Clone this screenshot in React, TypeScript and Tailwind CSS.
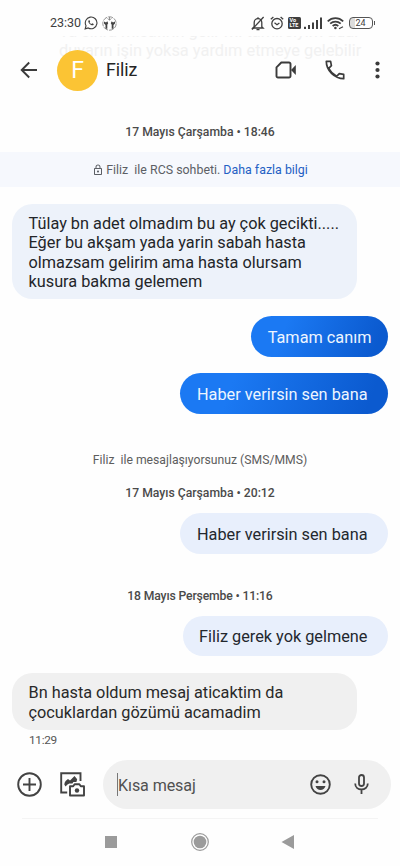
import React from 'react';
import { MdOutlineLock } from 'react-icons/md';

const ROBOTO = "font-['Roboto',sans-serif]";

function StatusBar() {
  return (
    <div className="relative flex h-[46px] items-center pl-[50px] pr-[25px] text-[#3f3f3f]">
      <span className="w-[34px] whitespace-nowrap text-[12.5px] leading-none">23:30</span>
      {/* WhatsApp */}
      <svg className="h-[14px] w-[14px]" viewBox="0 0 24 24" fill="none" stroke="currentColor" strokeWidth="1.9">
        <path d="M2 22l1.5-5.3A10 10 0 1 1 7.3 20.5z" />
        <path d="M8.2 7.2c-1.8 1.6-.5 4.3 1.7 6.5 2.3 2.2 5.1 3.3 6.6 1.3l.1-1.3-2.5-1.3-1.2 1.3c-1.5-.6-2.7-1.7-3.4-3.2l1-1.1-1-2.3z" fill="currentColor" stroke="none" />
      </svg>
      <svg className="ml-[4px] h-[15px] w-[15px]" viewBox="0 0 15 15" fill="none" stroke="#666" strokeWidth="0.7">
        <circle cx="7.5" cy="7.5" r="6.7" strokeDasharray="5 1" />
        <path d="M2 5.5l2 1 1.3-1.2.9 2-.9 1.4v4H3.500V9L2 7.500zM13 5.500l-2 1-1.300-1.200-.9 2 .9 1.400v4h1.800V9L13 7.500z" fill="#444" stroke="none" />
        <path d="M5.500 2.500L7.500 4l2-1.500M7.500 1v3" />
      </svg>
      <div className="ml-auto flex items-center">
        <svg className="h-[15px] w-[14px]" viewBox="0 0 14 15" fill="none" stroke="currentColor" strokeWidth="1.3">
          <path d="M3.200 10.800V6.500a3.800 3.800 0 0 1 7.600 0v4.300l1.300 1.200H1.900z" />
          <path d="M7 1.200v1.500M5.500 13.600h3" />
          <path d="M12.600 1L1 13.500" />
        </svg>
        <svg className="ml-[5px] h-[14px] w-[14px]" viewBox="0 0 14 14" fill="none" stroke="currentColor" strokeWidth="1.3">
          <circle cx="7" cy="7.700" r="5.200" />
          <path d="M.8 3.300l2.600-2.200M13.200 3.300l-2.600-2.200M4.500 6.700L7 8.700l2.400-1.800" />
        </svg>
        <span className="ml-[4px] flex h-[12px] w-[13px] flex-col items-center justify-center rounded-[1.5px] bg-[#3f3f3f] text-[5.5px] font-bold leading-[5px] text-white">
          Vo<br />LTE
        </span>
        <svg className="ml-[3px] h-[12px] w-[18px]" viewBox="0 0 18 12" fill="currentColor">
          <path d="M0 9.800h2V12H0zM4 8h2v4H4zM8 5.600h2V12H8zM12 3h2v9h-2zM16 .5h2V12h-2z" />
        </svg>
        <svg className="ml-[5px] h-[13px] w-[17px]" viewBox="0 0 17 13" fill="none" stroke="currentColor" strokeWidth="1.7">
          <path d="M.7 4.300c4.500-4.200 11-4.200 15.500 0M3.200 6.700c3-2.800 7.500-2.800 10.500 0M5.600 9c1.700-1.500 4-1.500 5.700 0" />
          <circle cx="8.400" cy="11" r="1.300" fill="currentColor" stroke="none" />
          <path d="M12 11.800l4-2" strokeWidth="1.200" />
        </svg>
        <span className="ml-[5px] flex h-[12px] w-[24px] items-center justify-center rounded-[4px] border-[1.5px] border-[#555] bg-[linear-gradient(90deg,#dcdcdc_25%,#ffffff_25%)] text-[9px] leading-none">24</span>
        <span className="ml-px h-[4px] w-[1.5px] bg-[#555]" />
      </div>
    </div>
  );
}

function Header() {
  return (
    <header className="relative flex h-[48px] items-center pl-[20px] text-[#3b3b3b]">
      <svg className="h-[18px] w-[18px]" viewBox="0 0 18 18" fill="none" stroke="currentColor" strokeWidth="1.9">
        <path d="M17 9H2M9.200 1.500L1.700 9l7.500 7.500" />
      </svg>
      <div className="ml-[19px] flex h-[41px] w-[41px] items-center justify-center rounded-full bg-[#fbc434] text-[23px] leading-none text-white">F</div>
      <h1 className="ml-[8px] text-[17.8px] leading-none tracking-[-0.1px] text-[#252525]">Filiz</h1>
      <svg className="ml-auto h-[18px] w-[22px]" viewBox="0 0 22 18" fill="none" stroke="currentColor" strokeWidth="1.9" strokeLinejoin="round">
        <path d="M6.300 1.500H14a1.500 1.500 0 0 1 1.500 1.500v12a1.500 1.500 0 0 1-1.500 1.500H3A1.500 1.500 0 0 1 1.500 15V6.300z" />
        <path d="M16 9l4.800-5v10z" fill="currentColor" stroke="none" />
      </svg>
      {/* Handset */}
      <svg className="ml-[28px] h-[20px] w-[20px]" viewBox="0 0 20 20" fill="none" stroke="currentColor" strokeWidth="1.7" strokeLinejoin="round">
        <path d="M1.300 1.300h4.300l.8 4.400-2.700 2.700c1.800 3.400 4.400 6 7.900 7.900l2.700-2.700 4.400.8v4.300C9.500 18.700 1.300 10.500 1.300 1.300z" />
      </svg>
      <svg className="ml-[30px] mr-[20px] h-[18px] w-[5px]" viewBox="0 0 5 18" fill="currentColor">
        <circle cx="2.500" cy="2.500" r="2.100" />
        <circle cx="2.500" cy="9" r="2.100" />
        <circle cx="2.500" cy="15.500" r="2.100" />
      </svg>
    </header>
  );
}

function DateLabel({ children, tight }: { children: React.ReactNode; tight?: boolean }) {
  return (
    <div
      className={`flex h-[20px] items-center justify-center whitespace-nowrap text-[12.2px] font-medium text-[#4a4a4a] ${tight ? 'tracking-[-0.15px]' : ''}`}
    >
      {children}
    </div>
  );
}

const tones = {
  received: 'self-start w-[345px] pl-[16.5px] bg-[#edf2fa] text-[#232529]',
  plain: 'self-start w-[345px] pl-[16.5px] bg-[#f0f0f0] text-[#292929]',
  rcs: 'self-end bg-[linear-gradient(110deg,#1b79f3_25%,#0b5acf_90%)] text-[#edf5ff]',
  sms: 'self-end pl-[16.5px] pr-[20.5px] bg-[#e8effc] text-[#23272e]',
};

function Bubble({ tone, className, lines }: { tone: keyof typeof tones; className: string; lines: string[] }) {
  return (
    <div className={`flex flex-col justify-center rounded-[20.5px] pt-[2px] text-[16.3px] leading-[19.3px] ${tones[tone]} ${className}`}>
      {lines.map((line) => (
        <span key={line} className="whitespace-nowrap">{line}</span>
      ))}
    </div>
  );
}

function Composer() {
  return (
    <div className="flex h-[49px] items-center pl-[17px] pr-[9px] text-[#434343]">
      <svg className="h-[25px] w-[25px]" viewBox="0 0 25 25" fill="none" stroke="currentColor" strokeWidth="1.9">
        <circle cx="12.500" cy="12.500" r="11.300" />
        <path d="M12.500 6v13M6 12.500h13" />
      </svg>
      {/* Gallery with camera */}
      <svg className="ml-[18px] h-[25px] w-[25px]" viewBox="0 0 25 25" fill="none" stroke="currentColor" strokeWidth="1.9">
        <path d="M20.500 9V1.300H1.200V20.500h6" />
        <path d="M4.300 12.500c.3-3.200 2-4.300 3.700-5.500l2 1.500 4.500-4.500 2.700 3.200-.8 2.800h-3l-1 1.500H9.300l-1.800 1-2 2z" fill="currentColor" stroke="none" />
        <path d="M10 14.200h3.200l1.400-2h4.800l1.400 2H24v9.300H10z" strokeLinejoin="round" />
        <circle cx="17" cy="18.500" r="2.200" fill="currentColor" stroke="none" />
      </svg>
      <div className="ml-[18px] flex h-full flex-1 items-center rounded-full bg-[#f0f0f0] pl-[14px] pr-[22px]">
        <span className="h-[23px] w-px bg-[#777]" />
        <span className="pt-[3px] text-[16.1px] tracking-[-0.1px] text-[#515151]">Kısa mesaj</span>
        <svg className="ml-auto h-[21px] w-[21px]" viewBox="0 0 21 21" fill="none" stroke="currentColor" strokeWidth="1.9">
          <circle cx="10.500" cy="10.500" r="9.300" />
          <circle cx="7" cy="7.800" r="1.500" fill="currentColor" stroke="none" />
          <circle cx="14" cy="7.800" r="1.500" fill="currentColor" stroke="none" />
          <path d="M5.500 12h10c-.8 2.500-2.700 3.900-5 3.900S6.300 14.500 5.500 12z" fill="currentColor" stroke="none" />
        </svg>
        <svg className="mb-[2px] ml-[23px] h-[20px] w-[15px]" viewBox="0 0 15 20" fill="none" stroke="currentColor" strokeWidth="1.8">
          <rect x="5" y="1" width="5" height="11" rx="2.500" />
          <path d="M1.200 9.500c0 8 12.600 8 12.600 0M7.500 15.500V20" />
        </svg>
      </div>
    </div>
  );
}

function NavBar() {
  return (
    <nav className="flex h-[46px] items-center pl-[105px] text-[#9b9b9b]">
      <span className="h-[12px] w-[12px] bg-[#9b9b9b]" />
      <svg className="ml-[74px] h-[18px] w-[18px]" viewBox="0 0 18 18" fill="none" stroke="currentColor">
        <circle cx="9" cy="9" r="8.300" strokeWidth="1.200" />
        <circle cx="9" cy="9" r="6.300" fill="currentColor" stroke="none" />
      </svg>
      <svg className="ml-[72px] h-[14px] w-[13px]" viewBox="0 0 13 14" fill="currentColor">
        <path d="M13 0v14L.5 7z" />
      </svg>
    </nav>
  );
}

export default function App() {
  return (
    <div className={`relative flex h-[866px] w-[400px] flex-col overflow-hidden bg-[#fefefe] ${ROBOTO}`}>
      {/* Scrolled message showing faintly through the translucent header */}
      <div className="absolute left-[59px] top-[36px] w-[320px] text-[16.4px] leading-[19.300px] text-[#f1f1f1]">
        <div className="flex h-[5px] items-end overflow-hidden whitespace-nowrap">Ya sınra misafirin gelir mi tamirciyim adar</div>
        <div className="whitespace-nowrap">duyarın işin yoksa yardım etmeye gelebilir</div>
      </div>

      <StatusBar />
      <Header />

      <main className="flex flex-col pt-[28px]">
        <DateLabel>17 Mayıs Çarşamba • 18:46</DateLabel>

        <div className="mt-[10px] flex h-[35px] items-center justify-center whitespace-pre bg-[#f6f8fd] pt-[2px] text-[12.4px] text-[#5c5f65]">
          <MdOutlineLock className="mb-[2px] mr-[2px] h-[12px] w-[12px]" />
          <span>Filiz  ile RCS sohbeti. </span>
          <a className="text-[#2460c4]">Daha fazla bilgi</a>
        </div>

        <div className="flex flex-col px-[12px] pt-[17px]">
          <Bubble
            tone="received"
            className="h-[95px]"
            lines={[
              'Tülay bn adet olmadım bu ay çok gecikti.....',
              'Eğer bu akşam yada yarin sabah hasta',
              'olmazsam gelirim ama hasta olursam',
              'kusura bakma gelemem',
            ]}
          />
          <Bubble tone="rcs" className="mt-[17px] h-[41px] px-[16.5px]" lines={['Tamam canım']} />
          <Bubble tone="rcs" className="mt-[16px] h-[41px] pl-[16.5px] pr-[20.5px]" lines={['Haber verirsin sen bana']} />

          <div className="mt-[36px] flex h-[20px] items-center justify-center whitespace-pre text-[12.2px] text-[#5d5d5d]">
            Filiz  ile mesajlaşıyorsunuz (SMS/MMS)
          </div>
          <div className="mt-[13px]">
            <DateLabel>17 Mayıs Çarşamba • 20:12</DateLabel>
          </div>
          <Bubble tone="sms" className="mt-[10px] h-[41px]" lines={['Haber verirsin sen bana']} />

          <div className="mt-[32px]">
            <DateLabel tight>18 Mayıs Perşembe • 11:16</DateLabel>
          </div>
          <Bubble tone="sms" className="mt-[10px] h-[40px]" lines={['Filiz gerek yok gelmene']} />
          <Bubble
            tone="plain"
            className="mt-[17px] h-[57px]"
            lines={['Bn hasta oldum mesaj aticaktim da', 'çocuklardan gözümü acamadim']}
          />
          <time className="ml-[17px] mt-[2px] h-[16px] text-[11.8px] leading-[16px] tracking-[-0.3px] text-[#555]">11:29</time>
        </div>
      </main>

      <div className="mt-[12px]">
        <Composer />
      </div>
      <div className="mx-[22px] mt-[9px] h-px bg-[#f4f4f4]" />
      <NavBar />
    </div>
  );
}
